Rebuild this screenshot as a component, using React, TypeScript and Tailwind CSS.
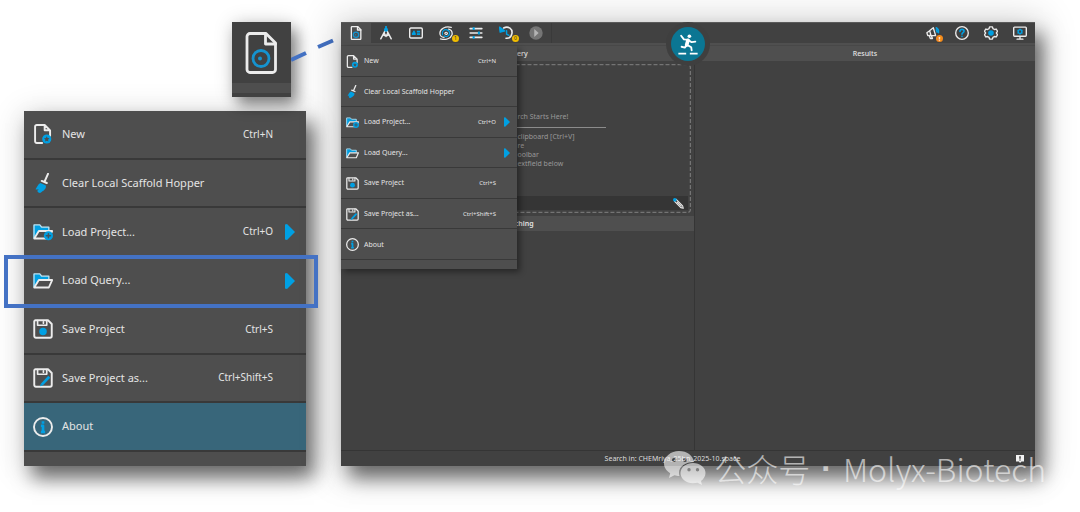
import type { ReactNode } from "react";

type IconProps = { className?: string };

const BLUE = "#00a0e3";
const LINE = "#ececec";

function Svg({ className, children, box = "0 0 24 24" }: { className?: string; children: ReactNode; box?: string }) {
  return (
    <svg viewBox={box} className={className} fill="none" stroke={LINE} strokeWidth="2.3" strokeLinejoin="round" strokeLinecap="round" aria-hidden="true">
      {children}
    </svg>
  );
}

const NewIcon = ({ className }: IconProps) => (
  <Svg className={className}>
    <path d="M11 22.800H4.500a2 2 0 0 1-2-2V3.200a2 2 0 0 1 2-2H14l6.500 6.500V14M14 1.500V7.500h6" />
    <circle cx="16.500" cy="18" r="5.500" fill={BLUE} stroke="none" />
    <path d="M16.500 14.700l1 2.200 2.300.3-1.700 1.600.4 2.300-2-1.100-2 1.100.4-2.300-1.700-1.600 2.300-.3z" fill="#4e4e4e" stroke="none" />
  </Svg>
);

const BroomIcon = ({ className }: IconProps) => (
  <Svg className={className}>
    <path d="M18 1l-4 9M10.500 9.500l6 2.500" strokeWidth="2.400" />
    <path d="M9 12l6.500 3c.5 5-3 6-7 9-2 0-3-1-3.500-3 1 0 1.500-.5 1.500-1.500-1.500.5-2.500.5-3.500 0 2-2.500 3-6.500 6-7.500z" fill={BLUE} stroke="none" />
  </Svg>
);

const FolderShape = () => (
  <>
    <path d="M1 19V4h7l2 2.500h9V10H7L2 19z" fill={BLUE} stroke={BLUE} strokeWidth="1" />
    <path d="M1.200 19V3.500h7l2 2.500H19V9.500" stroke="#bfe3f2" strokeWidth="1.500" />
    <path d="M1.500 19.800L7 10.800h16l-4 9z" fill="#4e4e4e" strokeWidth="2.200" />
  </>
);

const LoadProjectIcon = ({ className }: IconProps) => (
  <Svg className={className}>
    <FolderShape />
    <circle cx="18.500" cy="16.500" r="5.500" fill={BLUE} stroke="none" />
    <path d="M18.500 14v5M16 16.500h5" stroke="#3f5661" strokeWidth="1.800" />
  </Svg>
);

const FolderIcon = ({ className }: IconProps) => (
  <Svg className={className}>
    <FolderShape />
  </Svg>
);

const DiskShape = () => (
  <>
    <path d="M3 1.500h15L22.500 6v14.500a2 2 0 0 1-2 2h-17a2 2 0 0 1-2-2V3A1.500 1.500 0 0 1 3 1.500z" />
    <path d="M5.500 2v5.500h11V2M12.500 3.500v1.500" strokeWidth="2" />
  </>
);

const SaveIcon = ({ className }: IconProps) => (
  <Svg className={className}>
    <DiskShape />
    <circle cx="12" cy="15" r="4.500" fill={BLUE} stroke="none" />
  </Svg>
);

const SaveAsIcon = ({ className }: IconProps) => (
  <Svg className={className}>
    <DiskShape />
    <path d="M10.500 20l9-9.500" stroke={BLUE} strokeWidth="3.200" strokeLinecap="butt" />
    <path d="M8.500 22l.8-3 2.200 2z" fill={BLUE} stroke="none" />
  </Svg>
);

const AboutIcon = ({ className }: IconProps) => (
  <Svg className={className}>
    <circle cx="12" cy="12" r="10.800" />
    <path d="M12 5v3M9.500 10.500H12v7M9.500 18h5" stroke={BLUE} strokeWidth="3.200" strokeLinecap="butt" />
  </Svg>
);

const FileIcon = ({ className, strokeWidth = 2.8 }: IconProps & { strokeWidth?: number }) => (
  <Svg className={className} box="0 0 32 42">
    <path d="M5 1.500h16L30.500 11v26.500a3 3 0 0 1-3 3H5a3 3 0 0 1-3-3v-33a3 3 0 0 1 3-3z" strokeWidth={strokeWidth} />
    <path d="M20.500 2v10h10" strokeWidth={strokeWidth} />
    <circle cx="16" cy="26.500" r="8" stroke="#1593cf" strokeWidth={strokeWidth} />
    <circle cx="15" cy="26.500" r="2" fill="#1593cf" stroke="none" />
  </Svg>
);

const ToolFileIcon = ({ className }: IconProps) => <FileIcon className={className} strokeWidth={4} />;

const CompassIcon = ({ className }: IconProps) => (
  <Svg className={className}>
    <path d="M10.500 8L3 22M13.500 8L21 22M8 15.500l4 2 4-2M9 12l3 6 3-6" strokeWidth="2.500" />
    <path d="M12 1v3" stroke={BLUE} strokeWidth="3" />
    <circle cx="12" cy="6.500" r="3.500" fill={BLUE} stroke="none" />
  </Svg>
);

const CardIcon = ({ className }: IconProps) => (
  <Svg className={className}>
    <rect x="1.200" y="3.500" width="21.600" height="17" rx="2" strokeWidth="2.400" />
    <path d="M5 15.500v-4l2-1V8h3v2.500l1.500 1v4zM13.500 8H19v3h-5.500zM13.500 12.500H19v3h-5.500z" fill={BLUE} stroke="none" />
  </Svg>
);

const GalaxyIcon = ({ className }: IconProps) => (
  <Svg className={className}>
    <path d="M21 2.500C11-.5 2 5 1.500 12c0 4.500 3 7.500 7 7.500" strokeWidth="2.200" />
    <path d="M2.500 22c9 3 18-1 20-7.500.5-5-2-8-6-9" strokeWidth="2.200" />
    <path d="M6 15C4 9 9 5 14 6.500c4 1.500 5.500 6 3 9-2 2.500-5.500 3-8 1.500" stroke={BLUE} strokeWidth="2.200" />
    <path d="M10 13c0-3 4-3 4.500-.5 0 2-2.500 2.500-3.500 1.500" strokeWidth="2" />
  </Svg>
);

const SlidersIcon = ({ className }: IconProps) => (
  <Svg className={className}>
    <path d="M2 4.500h20M2 12h20M2 19.500h20" strokeWidth="2.800" />
    <path d="M8 2v5M17 9.500v5M8 17v5" stroke={BLUE} strokeWidth="3.500" strokeLinecap="butt" />
  </Svg>
);

const HistoryIcon = ({ className }: IconProps) => (
  <Svg className={className}>
    <path d="M8 3.500c8-4.500 16 2 14 10-1 5-5 8-10 7.500" strokeWidth="2.700" />
    <path d="M13 8v6l4 2" stroke={BLUE} strokeWidth="2.500" />
    <path d="M1 2l1 8.500 8-2z" fill={BLUE} stroke={BLUE} />
  </Svg>
);

const PlayIcon = ({ className }: IconProps) => (
  <Svg className={className}>
    <circle cx="12" cy="12" r="11.500" fill="#757575" stroke="none" />
    <path d="M9 5l7.500 7L9 19z" fill="#b4b4b4" stroke="none" />
  </Svg>
);

const MegaphoneIcon = ({ className }: IconProps) => (
  <Svg className={className}>
    <path d="M1.500 11.500L5 9l7.500-6 4 13.500-9.500-.5-4 .5zM5.500 16.500l2 5h3.500l-1.500-4.500M6.500 9l2 7" />
    <path d="M17.500 3c3 1.500 4.500 4.500 4 8.500M17.500 7c1 1 1.500 2 1.500 3.500" stroke={BLUE} strokeWidth="2.500" />
  </Svg>
);

const HelpIcon = ({ className }: IconProps) => (
  <Svg className={className}>
    <circle cx="12" cy="12" r="10.800" />
    <path d="M8.500 9.500c0-5 7-4.500 7-.5 0 2.500-3.500 2.500-3.500 5M12 17.500v.5" stroke={BLUE} strokeWidth="2.800" />
  </Svg>
);

const GearIcon = ({ className }: IconProps) => (
  <Svg className={className}>
    <path d="M9.500 1.500h5l.8 3 2.700 1.500 3-.8 2.200 4-2 2.800 2 2.800-2.200 4-3-.8-2.700 1.500-.8 3h-5l-.8-3L6 18l-3 .8-2.200-4 2-2.800-2-2.800L3 5.200 6 6l2.700-1.500z" />
    <circle cx="12" cy="12" r="4.800" fill={BLUE} stroke="none" />
  </Svg>
);

const MonitorIcon = ({ className }: IconProps) => (
  <Svg className={className}>
    <rect x="1.200" y="2" width="21.600" height="15.500" rx="1.500" strokeWidth="2.400" />
    <path d="M12 18v4M7 22.500h10" />
    <circle cx="12" cy="9.800" r="3.200" stroke={BLUE} strokeWidth="2.600" />
    <path d="M12 4.800v10M7.700 7.300l8.600 5M7.700 12.300l8.600-5" stroke={BLUE} strokeWidth="1.200" />
    <circle cx="12" cy="9.800" r="1.900" fill="#414141" stroke="none" />
  </Svg>
);

const PencilIcon = ({ className }: IconProps) => (
  <Svg className={className}>
    <path d="M3 7l4-4 14 14 1.500 5.500L17 21zM9 9l9 9" />
    <circle cx="4" cy="4" r="4" fill={BLUE} stroke="none" />
  </Svg>
);

const RunnerIcon = ({ className }: IconProps) => (
  <svg viewBox="0 0 24 24" className={className} fill="none" stroke="#fff" strokeWidth="2" strokeLinejoin="round" strokeLinecap="round" aria-hidden="true">
    <circle cx="13.500" cy="3.500" r="2" fill="#fff" stroke="none" />
    <path d="M4.500 3l3 4 5 .5M12 7.500l4 2.500 4-.5" strokeWidth="2" />
    <path d="M12 8l-1.500 5" strokeWidth="4" />
    <path d="M10.500 13.500L8.500 16 5 15M11 13l4.500 2.500L16 19" strokeWidth="2" />
    <path d="M1.500 22.500H10M14 22.500h8.500" strokeWidth="2" strokeLinecap="butt" />
  </svg>
);

const menuItems = [
  { label: "New", keys: "Ctrl+N", arrow: false, Icon: NewIcon },
  { label: "Clear Local Scaffold Hopper", keys: "", arrow: false, Icon: BroomIcon },
  { label: "Load Project...", keys: "Ctrl+O", arrow: true, Icon: LoadProjectIcon },
  { label: "Load Query...", keys: "", arrow: true, Icon: FolderIcon },
  { label: "Save Project", keys: "Ctrl+S", arrow: false, Icon: SaveIcon },
  { label: "Save Project as...", keys: "Ctrl+Shift+S", arrow: false, Icon: SaveAsIcon },
  { label: "About", keys: "", arrow: false, Icon: AboutIcon },
];

const large = {
  list: "h-[341px]",
  row: "border-b-2 pl-[9px] pr-[11px] text-[11px]",
  icon: "size-5",
  label: "ml-[9px]",
  keys: "text-[10px]",
  arrow: "ml-3 h-4 w-[10px]",
  foot: "h-[14px]",
};

const small = {
  list: "h-[214px]",
  row: "border-b pl-[5px] pr-[7px] pt-px text-[7px]",
  icon: "size-[13px]",
  label: "ml-[5px]",
  keys: "text-[6px]",
  arrow: "ml-2 h-[10px] w-[6px]",
  foot: "h-[9px]",
};

function FileMenu({ size, active, marked }: { size: "large" | "small"; active?: string; marked?: string }) {
  const s = size === "large" ? large : small;
  return (
    <div className="bg-[#4e4e4e] text-[#e4e4e4]">
      <ul className={`flex flex-col ${s.list}`}>
        {menuItems.map(({ label, keys, arrow, Icon }) => (
          <li key={label} className="relative flex min-h-0 flex-1">
            <button
              type="button"
              className={`flex w-full items-center border-[#393939] text-left whitespace-nowrap ${s.row} ${active === label ? "bg-[#38667a]" : ""}`}
            >
              <Icon className={`shrink-0 ${s.icon}`} />
              <span className={`flex-1 ${s.label}`}>{label}</span>
              <span className={s.keys}>{keys}</span>
              <svg viewBox="0 0 10 16" className={s.arrow} aria-hidden="true">
                {arrow && <path d="M0 0.500L2 0l8 8-8 8-2-.5z" fill={BLUE} />}
              </svg>
            </button>
            {marked === label && (
              <span className="pointer-events-none absolute -top-0.5 -right-3 -bottom-0.5 -left-5 z-10 border-4 border-[#4472c4]" />
            )}
          </li>
        ))}
      </ul>
      <div className={s.foot} />
    </div>
  );
}

const leftTools = [
  { name: "File", Icon: ToolFileIcon, badge: "" },
  { name: "Draw", Icon: CompassIcon, badge: "" },
  { name: "Compare", Icon: CardIcon, badge: "" },
  { name: "Spaces", Icon: GalaxyIcon, badge: "1" },
  { name: "Parameters", Icon: SlidersIcon, badge: "" },
  { name: "History", Icon: HistoryIcon, badge: "0" },
  { name: "Run", Icon: PlayIcon, badge: "" },
];

const rightTools = [
  { name: "News", Icon: MegaphoneIcon, badge: "!" },
  { name: "Help", Icon: HelpIcon, badge: "" },
  { name: "Settings", Icon: GearIcon, badge: "" },
  { name: "Display", Icon: MonitorIcon, badge: "" },
];

function Toolbar() {
  return (
    <div className="flex h-[21px] border-t border-[#5a5a5a] pr-px">
      {leftTools.map(({ name, Icon, badge }, i) => (
        <button key={name} type="button" aria-label={name} className={`relative flex w-[30px] items-center justify-center ${i === 0 ? "bg-[#4e4e4e]" : ""}`}>
          <Icon className="size-[14px]" />
          {badge && (
            <span className="absolute right-0.5 bottom-px flex size-[7px] items-center justify-center rounded-full bg-[#f0bc00] text-[5px] leading-none text-[#333]">
              {badge}
            </span>
          )}
        </button>
      ))}
      <div className="flex-1 border-l border-[#3a3a3a]" />
      {rightTools.map(({ name, Icon, badge }) => (
        <button key={name} type="button" aria-label={name} className="relative flex w-[29px] items-center justify-center">
          <Icon className="size-[14px]" />
          {badge && (
            <span className="absolute right-1 bottom-px flex size-[7px] items-center justify-center rounded-full bg-[#f58a1c] text-[6px] leading-none font-bold text-white">
              {badge}
            </span>
          )}
        </button>
      ))}
    </div>
  );
}

function PanelTitle({ children, bold }: { children: ReactNode; bold?: boolean }) {
  return (
    <h2 className={`flex h-[15px] items-center justify-center bg-[#4f4f4f] pt-px text-[7px] text-[#e4e4e4] ${bold ? "font-semibold" : "font-medium"}`}>
      {children}
    </h2>
  );
}

function QueryPanel() {
  return (
    <section className="flex w-[51%] flex-col border-r border-[#353535]">
      <PanelTitle>Query</PanelTitle>
      <div className="relative m-[3px] flex h-[149px] flex-col">
        <svg className="absolute inset-0 size-full" aria-hidden="true">
          <rect x="0.5" y="0.5" width="99.700%" height="99.300%" rx="3" fill="none" stroke="#747474" strokeWidth="1.300" strokeDasharray="4 2" />
        </svg>
        <div className="flex flex-1 flex-col pt-[48px] text-[7px] leading-[9px] text-[#999999]">
          <p className="ml-[50%] h-[11px]">rch Starts Here!</p>
          <hr className="mx-[85px] mt-1 mb-1 border-[#8c8c8c]" />
          <div className="ml-[50%] flex flex-col whitespace-nowrap">
            <p>clipboard [Ctrl+V]</p>
            <p>re</p>
            <p>oolbar</p>
            <p>extfield below</p>
          </div>
        </div>
        <div className="m-[3px] flex h-[14px] items-center justify-end bg-[#353535] pr-1">
          <button type="button" aria-label="Edit">
            <PencilIcon className="size-[11px]" />
          </button>
        </div>
      </div>
      <PanelTitle bold>Matching</PanelTitle>
    </section>
  );
}

function AppWindow() {
  return (
    <div className="relative flex min-w-0 flex-1 flex-col bg-[#414141] shadow-[8px_12px_18px_0_rgba(0,0,0,0.55),0_2px_36px_6px_rgba(0,0,0,0.16)]">
      <Toolbar />
      <div className="h-[3px] border-b border-[#484848] bg-[#4f4f4f]" />
      <div className="flex flex-1">
        <QueryPanel />
        <section className="flex flex-1 flex-col">
          <PanelTitle>Results</PanelTitle>
        </section>
      </div>
      <footer className="relative flex h-4 items-center justify-center border-t border-[#353535] pt-px text-[7px] text-[#dcdcdc]">
        <p className="pr-[31px]">Search in: CHEMriya_25bn_2025-10.space</p>
        <svg viewBox="0 0 8 8" className="absolute right-[11px] size-2" aria-hidden="true">
          <path d="M0 0h8v6.500H5.500L4 8 3 6.500H0z" fill="#f2f2f2" />
          <path d="M4 1.200v2.500M4 4.600v1" stroke="#333" strokeWidth="1.400" />
        </svg>
      </footer>
      <button
        type="button"
        aria-label="Start search"
        className="absolute top-0 left-1/2 flex size-[44px] -translate-x-1/2 items-center justify-center rounded-full bg-[#3f3f3f]"
      >
        <span className="flex size-[34px] items-center justify-center rounded-full bg-[#0b7693]">
          <RunnerIcon className="size-[22px]" />
        </span>
      </button>
      <div className="absolute top-6 left-0 w-[176px] shadow-[3px_3px_6px_rgba(0,0,0,0.4)]">
        <FileMenu size="small" />
      </div>
    </div>
  );
}

function Watermark() {
  return (
    <div className="pointer-events-none absolute right-[34px] bottom-[26px] z-20 flex items-center gap-2 opacity-60">
      <svg viewBox="0 0 42 34" className="h-[34px] w-[42px]" fill="#fff" aria-hidden="true">
        <path d="M15 0c8 0 14 4.500 15 11-8 0-15 4-15 11 0 1 0 2 .5 3-2 0-3.500-.3-5-.8L5 27l1.200-4.800C2.500 20 0 16.500 0 12.500 0 5.500 7 0 15 0zM10 7a2 2 0 1 0 0 4 2 2 0 0 0 0-4zM21 7a2 2 0 1 0 0 4 2 2 0 0 0 0-4z" fillRule="evenodd" />
        <path d="M29 12c7 0 12.500 4.500 12.500 10 0 3.500-2 6-4.500 8l1 4-4.500-2.300c-1.500.3-3 .5-4.500.5-7 0-12.500-4.500-12.500-10.200S22 12 29 12zM25 17a1.700 1.700 0 1 0 0 3.400 1.700 1.700 0 0 0 0-3.400zM33.500 17a1.700 1.700 0 1 0 0 3.400 1.700 1.700 0 0 0 0-3.400z" fillRule="evenodd" />
      </svg>
      <p className="flex items-center gap-[11px] font-['Noto_Sans_CJK_SC',sans-serif] text-[32px] leading-[36px] font-light whitespace-nowrap text-white">
        <span>公众号</span>
        <span className="font-['Liberation_Sans',sans-serif] font-bold">·</span>
        <span>Molyx-Biotech</span>
      </p>
    </div>
  );
}

export default function App() {
  return (
    <main className="relative flex min-h-screen gap-[35px] bg-white pt-[22px] pr-[45px] pb-[46px] pl-6 font-['Noto_Sans',sans-serif]">
      <div className="flex w-[282px] shrink-0 flex-col gap-[14px]">
        <div className="relative mr-[15px] w-[59px] self-end bg-[#4a4a4a] shadow-[6px_8px_14px_rgba(0,0,0,0.45),0_0_20px_rgba(0,0,0,0.14)]">
          <div className="flex h-[61px] items-center justify-center bg-[#414141] pr-0.5">
            <FileIcon className="h-[42px] w-8" />
          </div>
          <div className="h-[14px] border-b-4 border-[#414141] bg-[#4e4e4e]" />
          <svg viewBox="0 0 46 26" className="absolute top-4 left-full h-[26px] w-[46px]" aria-hidden="true">
            <path d="M0 22L15 15M27 9L42 2.500" stroke="#4472c4" strokeWidth="4" />
          </svg>
        </div>
        <div className="shadow-[8px_12px_18px_0_rgba(0,0,0,0.55),0_4px_30px_2px_rgba(0,0,0,0.14)]">
          <FileMenu size="large" active="About" marked="Load Query..." />
        </div>
      </div>
      <AppWindow />
      <Watermark />
    </main>
  );
}
